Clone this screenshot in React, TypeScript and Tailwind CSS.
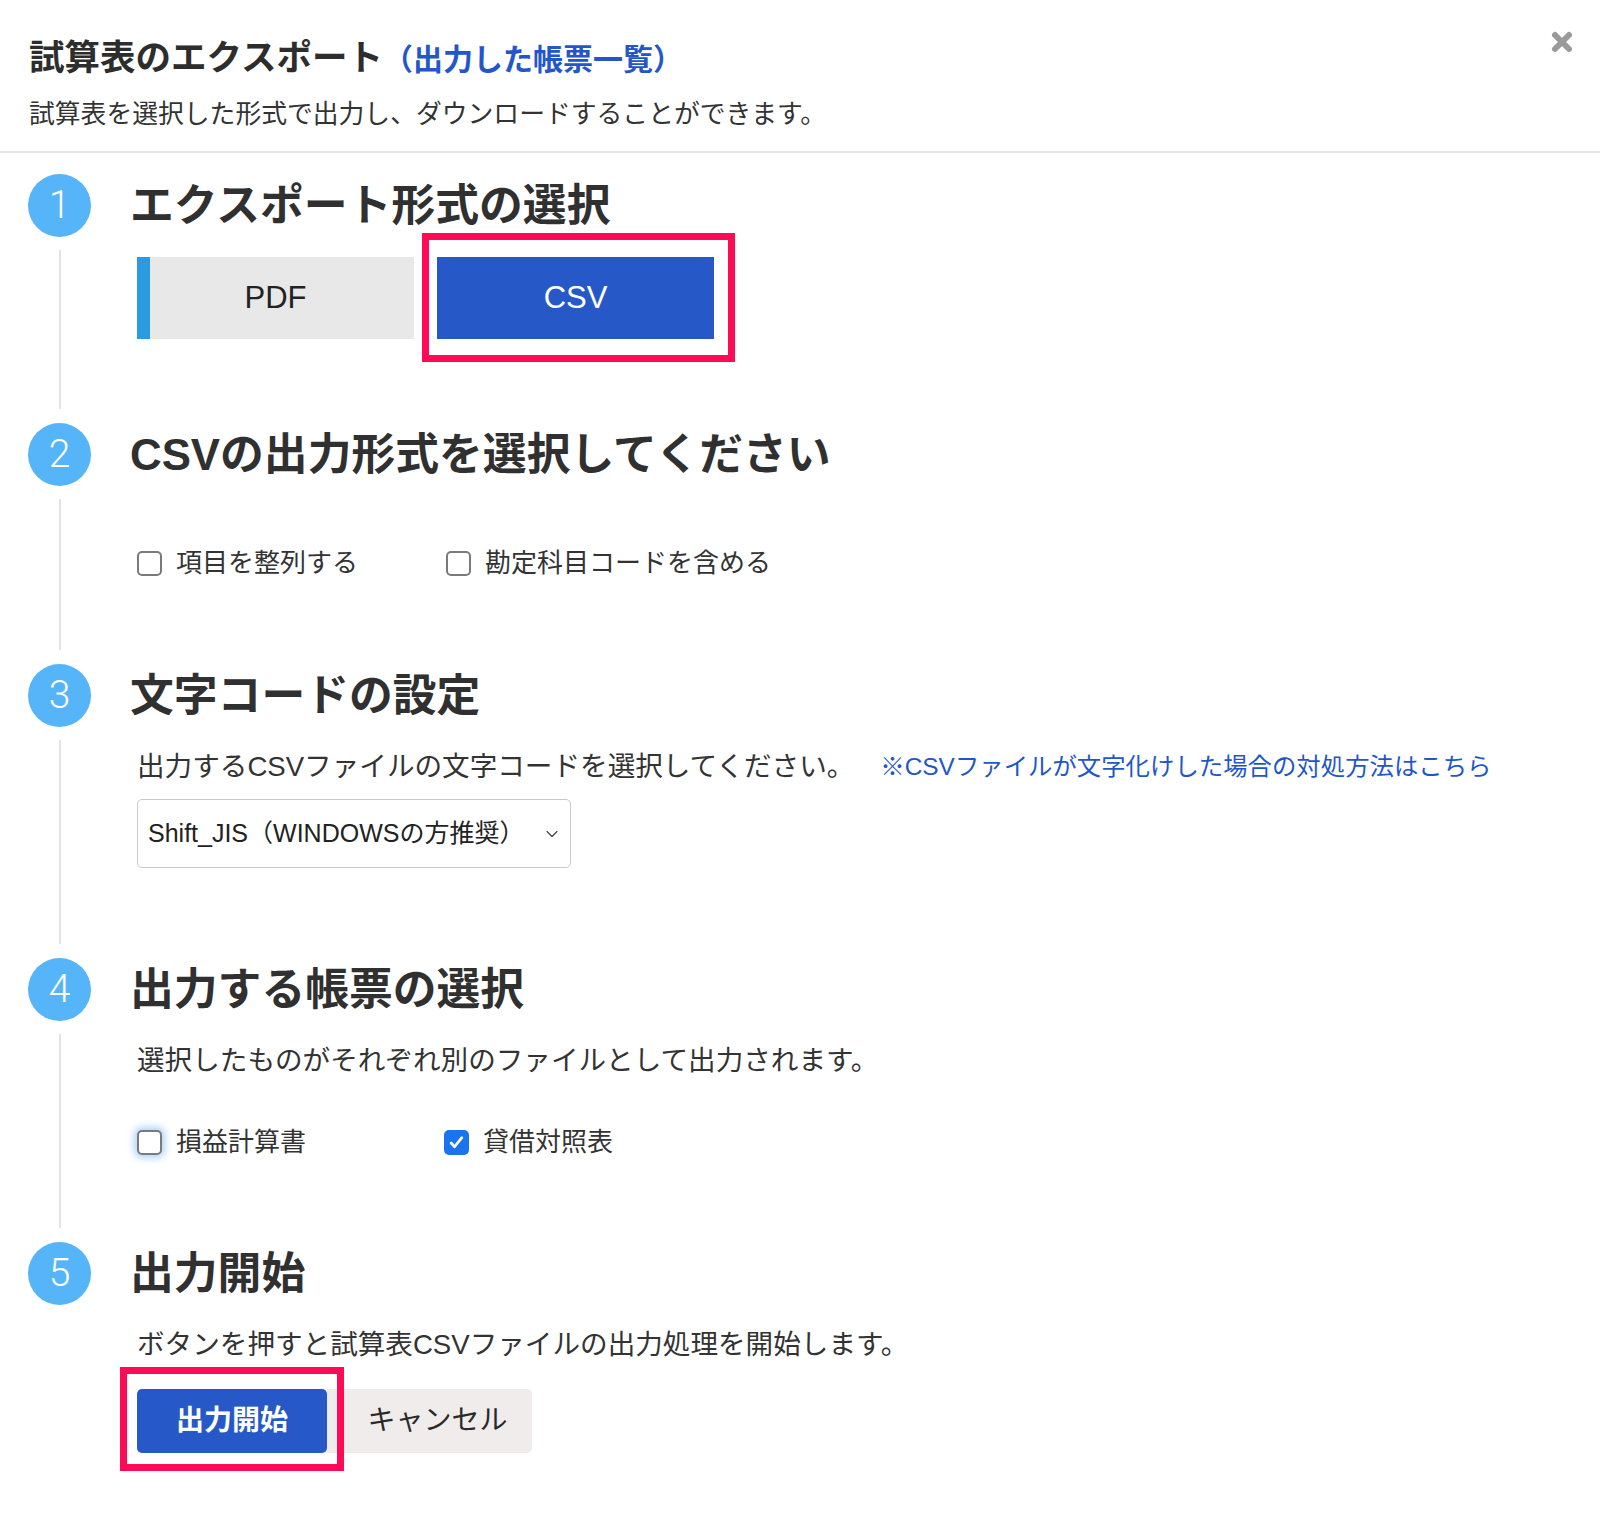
import { ChevronDown } from "lucide-react";
import type { ReactNode } from "react";

const jp = { fontFamily: '"Liberation Sans", "Noto Sans CJK JP", sans-serif' };

type StepProps = {
  n: number;
  title: ReactNode;
  children: ReactNode;
  last?: boolean;
  pad: string;
};

const Step = ({ n, title, children, last, pad }: StepProps) => {
  return (
    <div className="flex">
      <div className="flex w-[63px] shrink-0 flex-col items-center">
        <div
          className="flex h-[63px] w-[63px] items-center justify-center rounded-full bg-[#55b5f8] text-[39px] font-light text-white"
          style={{ fontFamily: "Roboto, sans-serif" }}
        >
          {n}
        </div>
        {!last && <div className="mt-[13px] mb-[14px] w-[2px] flex-1 bg-[#e4e4e4]" />}
      </div>
      <div className={`ml-[39px] flex-1 ${pad}`}>
        <h2 className="flex h-[63px] items-center text-[43.8px] font-bold text-[#303030]">{title}</h2>
        {children}
      </div>
    </div>
  );
};

const Check = ({ checked, focus }: { checked?: boolean; focus?: boolean }) => {
  if (checked) {
    return (
      <span className="flex h-[25px] w-[25px] shrink-0 items-center justify-center rounded-[5px] bg-[#1a74f0]">
        <svg width="17" height="17" viewBox="0 0 16 16" fill="none">
          <path d="M3 8.5l3.2 3.5L13 3.5" stroke="white" strokeWidth="2.6" strokeLinecap="round" strokeLinejoin="round" />
        </svg>
      </span>
    );
  }
  return (
    <span
      className={`h-[25px] w-[25px] shrink-0 rounded-[5px] border-2 border-[#7a7a7a] bg-white ${
        focus ? "shadow-[0_0_7px_3px_rgba(80,160,250,0.45)]" : ""
      }`}
    />
  );
};

const App = () => {
  return (
    <div className="relative min-h-[1525px] w-full bg-white text-[#333]" style={jp}>
      <button className="absolute right-[26px] top-[30px]">
        <svg width="24" height="24" viewBox="0 0 24 24">
          <path d="M5 5L19 19M19 5L5 19" stroke="#9a9a9a" strokeWidth="6" strokeLinecap="round" />
        </svg>
      </button>

      <div className="border-b-2 border-[#e6e6e6] pl-[29px] pt-[36px] pb-[19px]">
        <h1 className="flex items-baseline text-[35.5px] font-bold leading-[44px] text-[#2d2d2d]">
          試算表のエクスポート
          <a className="ml-[0px] text-[30px] text-[#2356c8]">（出力した帳票一覧）</a>
        </h1>
        <p className="mt-[14px] text-[25.8px] leading-[36px]">
          試算表を選択した形式で出力し、ダウンロードすることができます。
        </p>
      </div>

      <div className="pl-[28px] pt-[21px]">
        <Step n={1} title="エクスポート形式の選択" pad="pb-[84px]">
          <div className="mt-[20px] flex gap-[23px] pl-[7px]">
            <div
              className="flex h-[82px] w-[277px] items-center justify-center border-l-[13px] border-[#2b9ae0] bg-[#e8e8e8] pr-[13px] text-[31px] text-[#222]"
              style={{ fontFamily: '"Liberation Sans", sans-serif' }}
            >
              PDF
            </div>
            <div
              className="relative flex h-[82px] w-[277px] items-center justify-center bg-[#2659c7] text-[31px] text-white"
              style={{ fontFamily: '"Liberation Sans", sans-serif' }}
            >
              CSV
              <span className="absolute -left-[15px] -top-[24px] -right-[21px] -bottom-[23px] border-[7px] border-[#ff0a56]" />
            </div>
          </div>
        </Step>

        <Step n={2} title="CSVの出力形式を選択してください" pad="pb-[85px]">
          <div className="mt-[61px] flex h-[32px] items-center pl-[7px] text-[26px]">
            <div className="flex w-[309px] items-center gap-[14px]">
              <Check />
              <span>項目を整列する</span>
            </div>
            <div className="flex items-center gap-[14px]">
              <Check />
              <span>勘定科目コードを含める</span>
            </div>
          </div>
        </Step>

        <Step n={3} title="文字コードの設定" pad="pb-[90px]">
          <div className="mt-[24px] flex h-[32px] items-center pl-[7px] text-[27.6px] leading-[32px]">
            <span>出力するCSVファイルの文字コードを選択してください。</span>
            <a className="ml-[26px] text-[24.4px] text-[#1f57c8]">※CSVファイルが文字化けした場合の対処方法はこちら</a>
          </div>
          <div className="ml-[7px] mt-[16px] flex h-[69px] w-[434px] items-center justify-between rounded-[5px] border border-[#c9c9c9] pl-[10px] pr-[8px] text-[25px] text-[#222]">
            <span>Shift_JIS（WINDOWSの方推奨）</span>
            <ChevronDown size={20} strokeWidth={1.4} color="#444" />
          </div>
        </Step>

        <Step n={4} title="出力する帳票の選択" pad="pb-[84px]">
          <p className="mt-[24px] h-[32px] pl-[7px] text-[27.6px] leading-[32px]">
            選択したものがそれぞれ別のファイルとして出力されます。
          </p>
          <div className="mt-[49px] flex h-[32px] items-center pl-[7px] text-[26px]">
            <div className="flex w-[307px] items-center gap-[14px]">
              <Check focus />
              <span>損益計算書</span>
            </div>
            <div className="flex items-center gap-[14px]">
              <Check checked />
              <span>貸借対照表</span>
            </div>
          </div>
        </Step>

        <Step n={5} title="出力開始" pad="pb-[73px]" last>
          <p className="mt-[24px] h-[32px] pl-[7px] text-[27.6px] leading-[32px]">
            ボタンを押すと試算表CSVファイルの出力処理を開始します。
          </p>
          <div className="mt-[28px] flex pl-[7px]">
            <div className="relative flex h-[64px] w-[190px] items-center justify-center rounded-[5px] bg-[#2659c7] text-[28px] font-bold text-white">
              出力開始
              <span className="absolute -left-[17px] -top-[22px] -right-[17px] -bottom-[18px] border-[7px] border-[#ff0a56]" />
            </div>
            <div className="flex h-[64px] w-[205px] items-center justify-center rounded-r-[5px] bg-[#efeceb] pl-[16px] text-[28px] text-[#2a2a2a]">
              キャンセル
            </div>
          </div>
        </Step>
      </div>
    </div>
  );
};

export default App;
